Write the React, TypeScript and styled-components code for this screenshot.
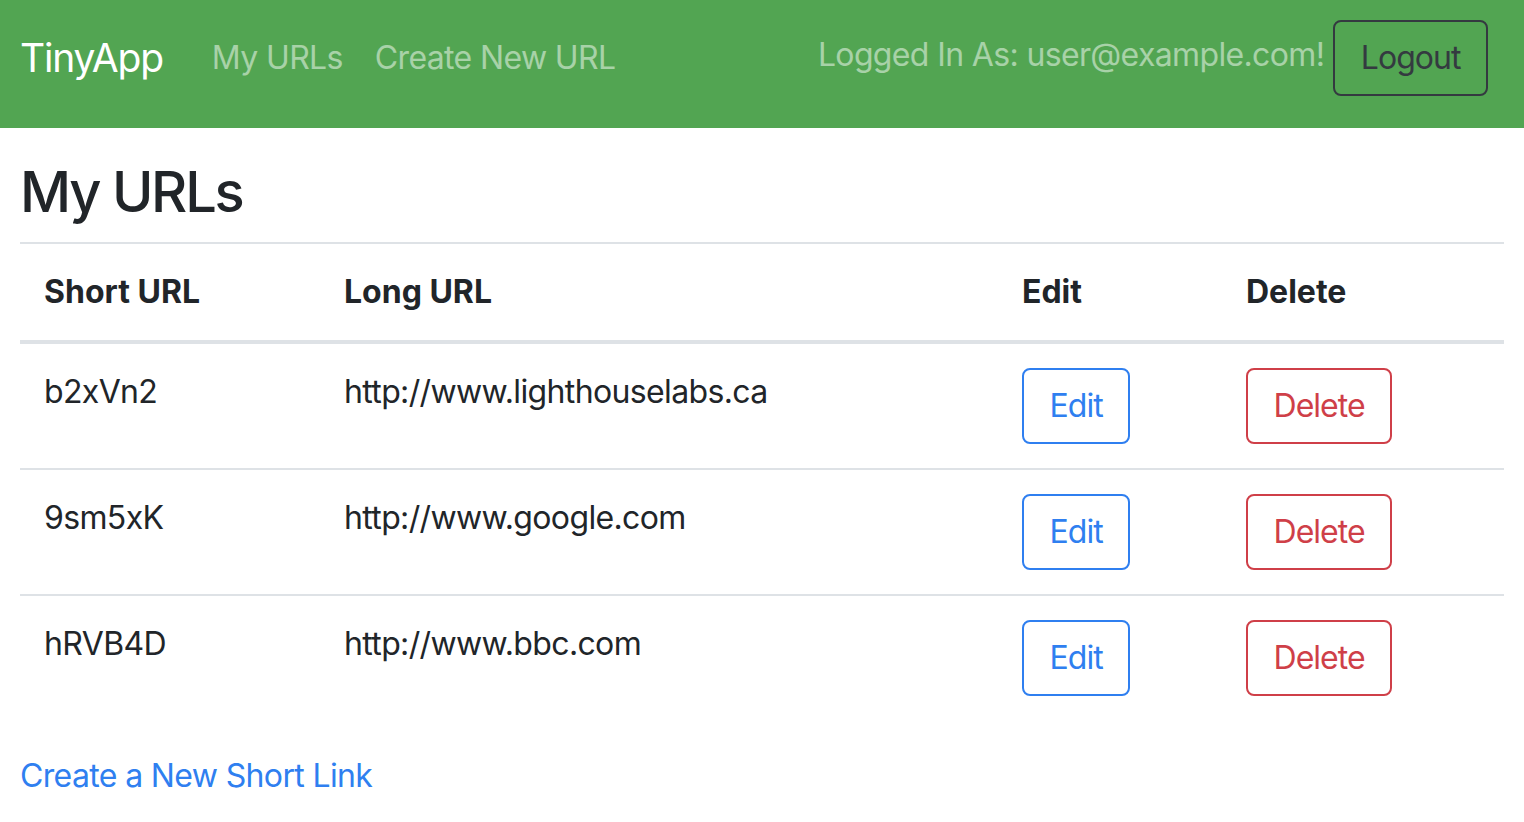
import React from "react";
import styled, { createGlobalStyle } from "styled-components";

const GlobalStyle = createGlobalStyle`
  html, body { margin: 0; padding: 0; background: #fff; }
  body {
    font-family: Inter, "Noto Sans", "Liberation Sans", sans-serif;
    color: #212529;
    letter-spacing: -0.04em;
    -webkit-font-smoothing: antialiased;
  }
  * { box-sizing: border-box; }
`;

const Navbar = styled.nav`
  display: flex;
  align-items: center;
  height: 128px;
  padding: 20px 36px 32px 20px;
  background: #52a552;
`;

const Brand = styled.a`
  font-size: 39px;
  letter-spacing: -0.03em;
  color: #fff;
  text-decoration: none;
  margin-right: 33px;
  line-height: 1.5;
`;

const NavLink = styled.a`
  font-size: 32px;
  color: rgba(255, 255, 255, 0.5);
  text-decoration: none;
  padding: 0 16px;
  line-height: 1.5;
`;

const UserArea = styled.div`
  margin-left: auto;
  display: flex;
  align-items: center;
  gap: 9px;
`;

const UserText = styled.span`
  font-size: 32px;
  color: rgba(255, 255, 255, 0.5);
  line-height: 1.5;
  margin-bottom: 6px;
`;

const Button = styled.button<{ $variant: "dark" | "primary" | "danger" }>`
  font-family: inherit;
  font-size: 32px;
  letter-spacing: -0.03em;
  line-height: 1.5;
  padding: 12px 25.5px;
  background: transparent;
  border-radius: 8px;
  border: 2px solid
    ${(p) =>
      p.$variant === "dark" ? "#343a40" : p.$variant === "primary" ? "#2f7ff0" : "#cf3f48"};
  color: ${(p) =>
    p.$variant === "dark" ? "#343a40" : p.$variant === "primary" ? "#2f7ff0" : "#cf3f48"};
  cursor: pointer;
`;

const Main = styled.main`
  padding: 0 20px;
`;

const Heading = styled.h1`
  font-size: 56px;
  letter-spacing: -0.04em;
  font-weight: 500;
  line-height: 1.2;
  margin: 31px 0 16px;
`;

const Table = styled.table`
  width: 100%;
  border-collapse: collapse;
  font-size: 32px;
  line-height: 1.5;
`;

const HeadCell = styled.th<{ $w: number }>`
  width: ${(p) => p.$w}px;
  text-align: left;
  font-weight: 700;
  letter-spacing: 0;
  padding: 24px;
  vertical-align: bottom;
  border-top: 2px solid #dee2e6;
  border-bottom: 4px solid #dee2e6;
`;

const Cell = styled.td`
  padding: 24px;
  vertical-align: top;
  border-top: 2px solid #dee2e6;
`;

const Row = styled.tr`
  &:first-child td { border-top: none; }
`;

const FooterLink = styled.a`
  display: inline-block;
  margin-top: 32px;
  font-size: 32px;
  line-height: 1.5;
  color: #2f7ff0;
  text-decoration: none;
`;

const urls = [
  { short: "b2xVn2", long: "http://www.lighthouselabs.ca" },
  { short: "9sm5xK", long: "http://www.google.com" },
  { short: "hRVB4D", long: "http://www.bbc.com" },
];

export default function App() {
  return (
    <>
      <GlobalStyle />
      <Navbar>
        <Brand href="#">TinyApp</Brand>
        <NavLink href="#">My URLs</NavLink>
        <NavLink href="#">Create New URL</NavLink>
        <UserArea>
          <UserText>Logged In As: user@example.com!</UserText>
          <Button $variant="dark">Logout</Button>
        </UserArea>
      </Navbar>
      <Main>
        <Heading>My URLs</Heading>
        <Table>
          <thead>
            <tr>
              <HeadCell $w={300}>Short URL</HeadCell>
              <HeadCell $w={678}>Long URL</HeadCell>
              <HeadCell $w={224}>Edit</HeadCell>
              <HeadCell $w={282}>Delete</HeadCell>
            </tr>
          </thead>
          <tbody>
            {urls.map((u) => (
              <Row key={u.short}>
                <Cell>{u.short}</Cell>
                <Cell>{u.long}</Cell>
                <Cell>
                  <Button $variant="primary">Edit</Button>
                </Cell>
                <Cell>
                  <Button $variant="danger">Delete</Button>
                </Cell>
              </Row>
            ))}
          </tbody>
        </Table>
        <FooterLink href="#">Create a New Short Link</FooterLink>
      </Main>
    </>
  );
}
